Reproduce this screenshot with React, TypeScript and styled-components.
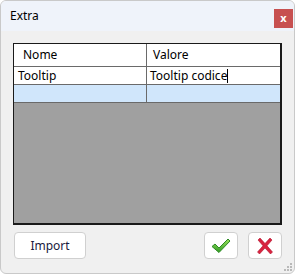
import { ReactElement } from 'react';
import styled, { createGlobalStyle } from 'styled-components';

const GlobalStyle = createGlobalStyle`
  html, body {
    margin: 0;
    padding: 0;
    background: #ffffff;
  }
  body {
    font-family: 'Noto Sans', 'Open Sans', sans-serif;
  }
`;

interface IRow {
  name: string;
  value: string;
  editing?: boolean;
}

const rows: IRow[] = [{ name: 'Tooltip', value: 'Tooltip codice', editing: true }];

function CheckIcon(): ReactElement {
  return (
    <svg width="20" height="16" viewBox="0 0 20 16">
      <defs>
        <linearGradient id="chk" x1="0" y1="0" x2="0" y2="1">
          <stop offset="0" stopColor="#9be35a" />
          <stop offset="1" stopColor="#2f9a25" />
        </linearGradient>
      </defs>
      <path
        d="M1 8.5 L4 6 L8 10 L17 1 L19 3 L8 14.5 Z"
        fill="url(#chk)"
        stroke="#2d8a24"
        strokeWidth="1"
        strokeLinejoin="round"
      />
    </svg>
  );
}

function CrossIcon(): ReactElement {
  return (
    <svg width="18" height="18" viewBox="0 0 18 18">
      <path
        d="M2 3 L4 1 L9 6.5 L14 1 L16 3 L11 8.8 L16.5 15 L14.5 17 L9 11 L3.5 17 L1.5 15 L7 8.8 Z"
        fill="#d8233f"
        stroke="#b3122d"
        strokeWidth="0.6"
        strokeLinejoin="round"
      />
    </svg>
  );
}

function ResizeGrip(): ReactElement {
  const dots = [
    [8, 2],
    [5, 5],
    [8, 5],
    [2, 8],
    [5, 8],
    [8, 8],
  ];
  return (
    <Grip width="10" height="10" viewBox="0 0 10 10">
      {dots.map(([x, y]) => (
        <rect key={`${x}-${y}`} x={x} y={y} width="2" height="2" fill="#b9b9b9" />
      ))}
    </Grip>
  );
}

export default function App(): ReactElement {
  return (
    <>
      <GlobalStyle />
      <Window>
        <TitleBar>
          <Title>Extra</Title>
          <CloseButton>x</CloseButton>
        </TitleBar>
        <Body>
          <Grid>
            <HeaderRow>
              <HeaderCell>Nome</HeaderCell>
              <HeaderCell $last>Valore</HeaderCell>
            </HeaderRow>
            {rows.map((r) => (
              <Row key={r.name}>
                <Cell>{r.name}</Cell>
                <Cell $last>
                  {r.value}
                  {r.editing && <Caret />}
                </Cell>
              </Row>
            ))}
            <Row $selected>
              <Cell />
              <Cell $last />
            </Row>
            <Empty />
          </Grid>
          <Footer>
            <Button $width={72}>Import</Button>
            <Actions>
              <Button $width={34}>
                <CheckIcon />
              </Button>
              <Button $width={34}>
                <CrossIcon />
              </Button>
            </Actions>
          </Footer>
          <ResizeGrip />
        </Body>
      </Window>
    </>
  );
}

const Window = styled.div`
  width: 295px;
  height: 274px;
  box-sizing: border-box;
  border: 1px solid #c9c9c9;
  border-radius: 6px;
  overflow: hidden;
  display: flex;
  flex-direction: column;
  background: #f0f0f0;
`;

const TitleBar = styled.div`
  height: 30px;
  flex-shrink: 0;
  display: flex;
  align-items: flex-start;
  justify-content: space-between;
  background: #eff3fa;
  padding: 7px 1px 0 9px;
  box-sizing: border-box;
`;

const Title = styled.div`
  font-size: 12px;
  color: #000000;
  line-height: 16px;
`;

const CloseButton = styled.div`
  width: 19px;
  height: 19px;
  margin-top: 1px;
  background: #c75050;
  color: #ffffff;
  font-size: 11px;
  font-weight: bold;
  line-height: 17px;
  text-align: center;
`;

const Body = styled.div`
  position: relative;
  flex: 1;
  display: flex;
  flex-direction: column;
  padding: 12px 12px 0 12px;
`;

const Grid = styled.div`
  height: 182px;
  box-sizing: border-box;
  border: 2px solid #1a1a1a;
  border-top-width: 1px;
  border-left-width: 1px;
  display: flex;
  flex-direction: column;
  background: #a0a0a0;
`;

const HeaderRow = styled.div`
  display: grid;
  grid-template-columns: 133px 1fr;
  height: 23px;
  background: #ffffff;
  border-bottom: 1px solid #6a6a6a;
  box-sizing: border-box;
`;

const HeaderCell = styled.div<{ $last?: boolean }>`
  font-size: 12px;
  line-height: 22px;
  padding-left: ${(p) => (p.$last ? '6px' : '9px')};
  color: #000000;
  border-right: ${(p) => (p.$last ? 'none' : '1px solid #6a6a6a')};
`;

const Row = styled.div<{ $selected?: boolean }>`
  display: grid;
  grid-template-columns: 133px 1fr;
  height: 18px;
  background: ${(p) => (p.$selected ? '#d0e6fb' : '#ffffff')};
  border-bottom: 1px solid #6a6a6a;
  box-sizing: border-box;
`;

const Cell = styled.div<{ $last?: boolean }>`
  font-size: 12px;
  line-height: 17px;
  padding-left: ${(p) => (p.$last ? '3px' : '4px')};
  color: #000000;
  white-space: nowrap;
  display: flex;
  align-items: center;
  border-right: ${(p) => (p.$last ? 'none' : '1px solid #6a6a6a')};
`;

const Caret = styled.span`
  display: inline-block;
  width: 1px;
  height: 14px;
  background: #000000;
`;

const Empty = styled.div`
  flex: 1;
`;

const Footer = styled.div`
  display: flex;
  justify-content: space-between;
  align-items: center;
  margin-top: 7px;
  padding-left: 1px;
`;

const Actions = styled.div`
  display: flex;
  gap: 10px;
`;

const Button = styled.button<{ $width: number }>`
  width: ${(p) => p.$width}px;
  height: 27px;
  box-sizing: border-box;
  border: 1px solid #d0d0d0;
  border-radius: 4px;
  background: #ffffff;
  font-family: 'Noto Sans', 'Open Sans', sans-serif;
  font-size: 12px;
  color: #1a1a40;
  padding: 0;
  display: flex;
  align-items: center;
  justify-content: center;
`;

const Grip = styled.svg`
  position: absolute;
  right: 2px;
  bottom: 2px;
`;
